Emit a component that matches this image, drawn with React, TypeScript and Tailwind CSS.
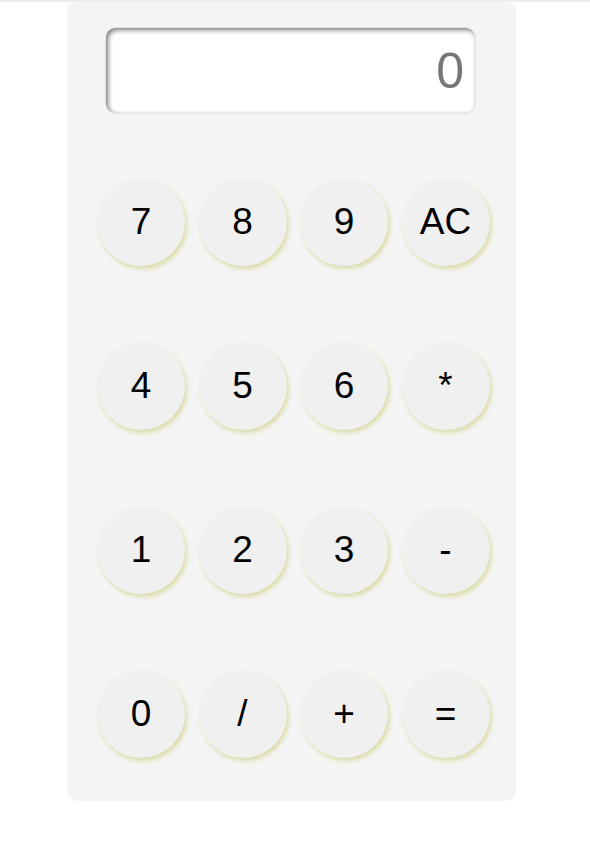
const KEYS = [
  ["7", "8", "9", "AC"],
  ["4", "5", "6", "*"],
  ["1", "2", "3", "-"],
  ["0", "/", "+", "="],
];

export default function App() {
  return (
    <div
      className="min-h-[864px] w-full bg-white border-t-2 border-[#ececec]"
      style={{ fontFamily: '"Liberation Sans", Arial, sans-serif' }}
    >
      <div className="ml-[67px] w-[449px] rounded-[10px] bg-[#f4f4f4] pt-[25px] pb-[43px]">
        <div className="ml-[38px] flex h-[87px] w-[371px] items-center justify-end rounded-[10px] border border-[#e4e4e4] bg-white pr-[11px] shadow-[inset_2px_2px_5px_#777]">
          <span className="text-[50px] leading-none text-[#777]">0</span>
        </div>
        <div className="mt-[64px] flex flex-col gap-[76px] pl-[30px]">
          {KEYS.map((row, i) => (
            <div key={i} className="flex gap-[13.5px]">
              {row.map((k) => (
                <button
                  key={k}
                  className="flex h-[88px] w-[88px] items-center justify-center rounded-full bg-[#f0f0f0] text-[37px] text-black shadow-[2px_3px_4px_#dcdcaa]"
                >
                  {k}
                </button>
              ))}
            </div>
          ))}
        </div>
      </div>
    </div>
  );
}
